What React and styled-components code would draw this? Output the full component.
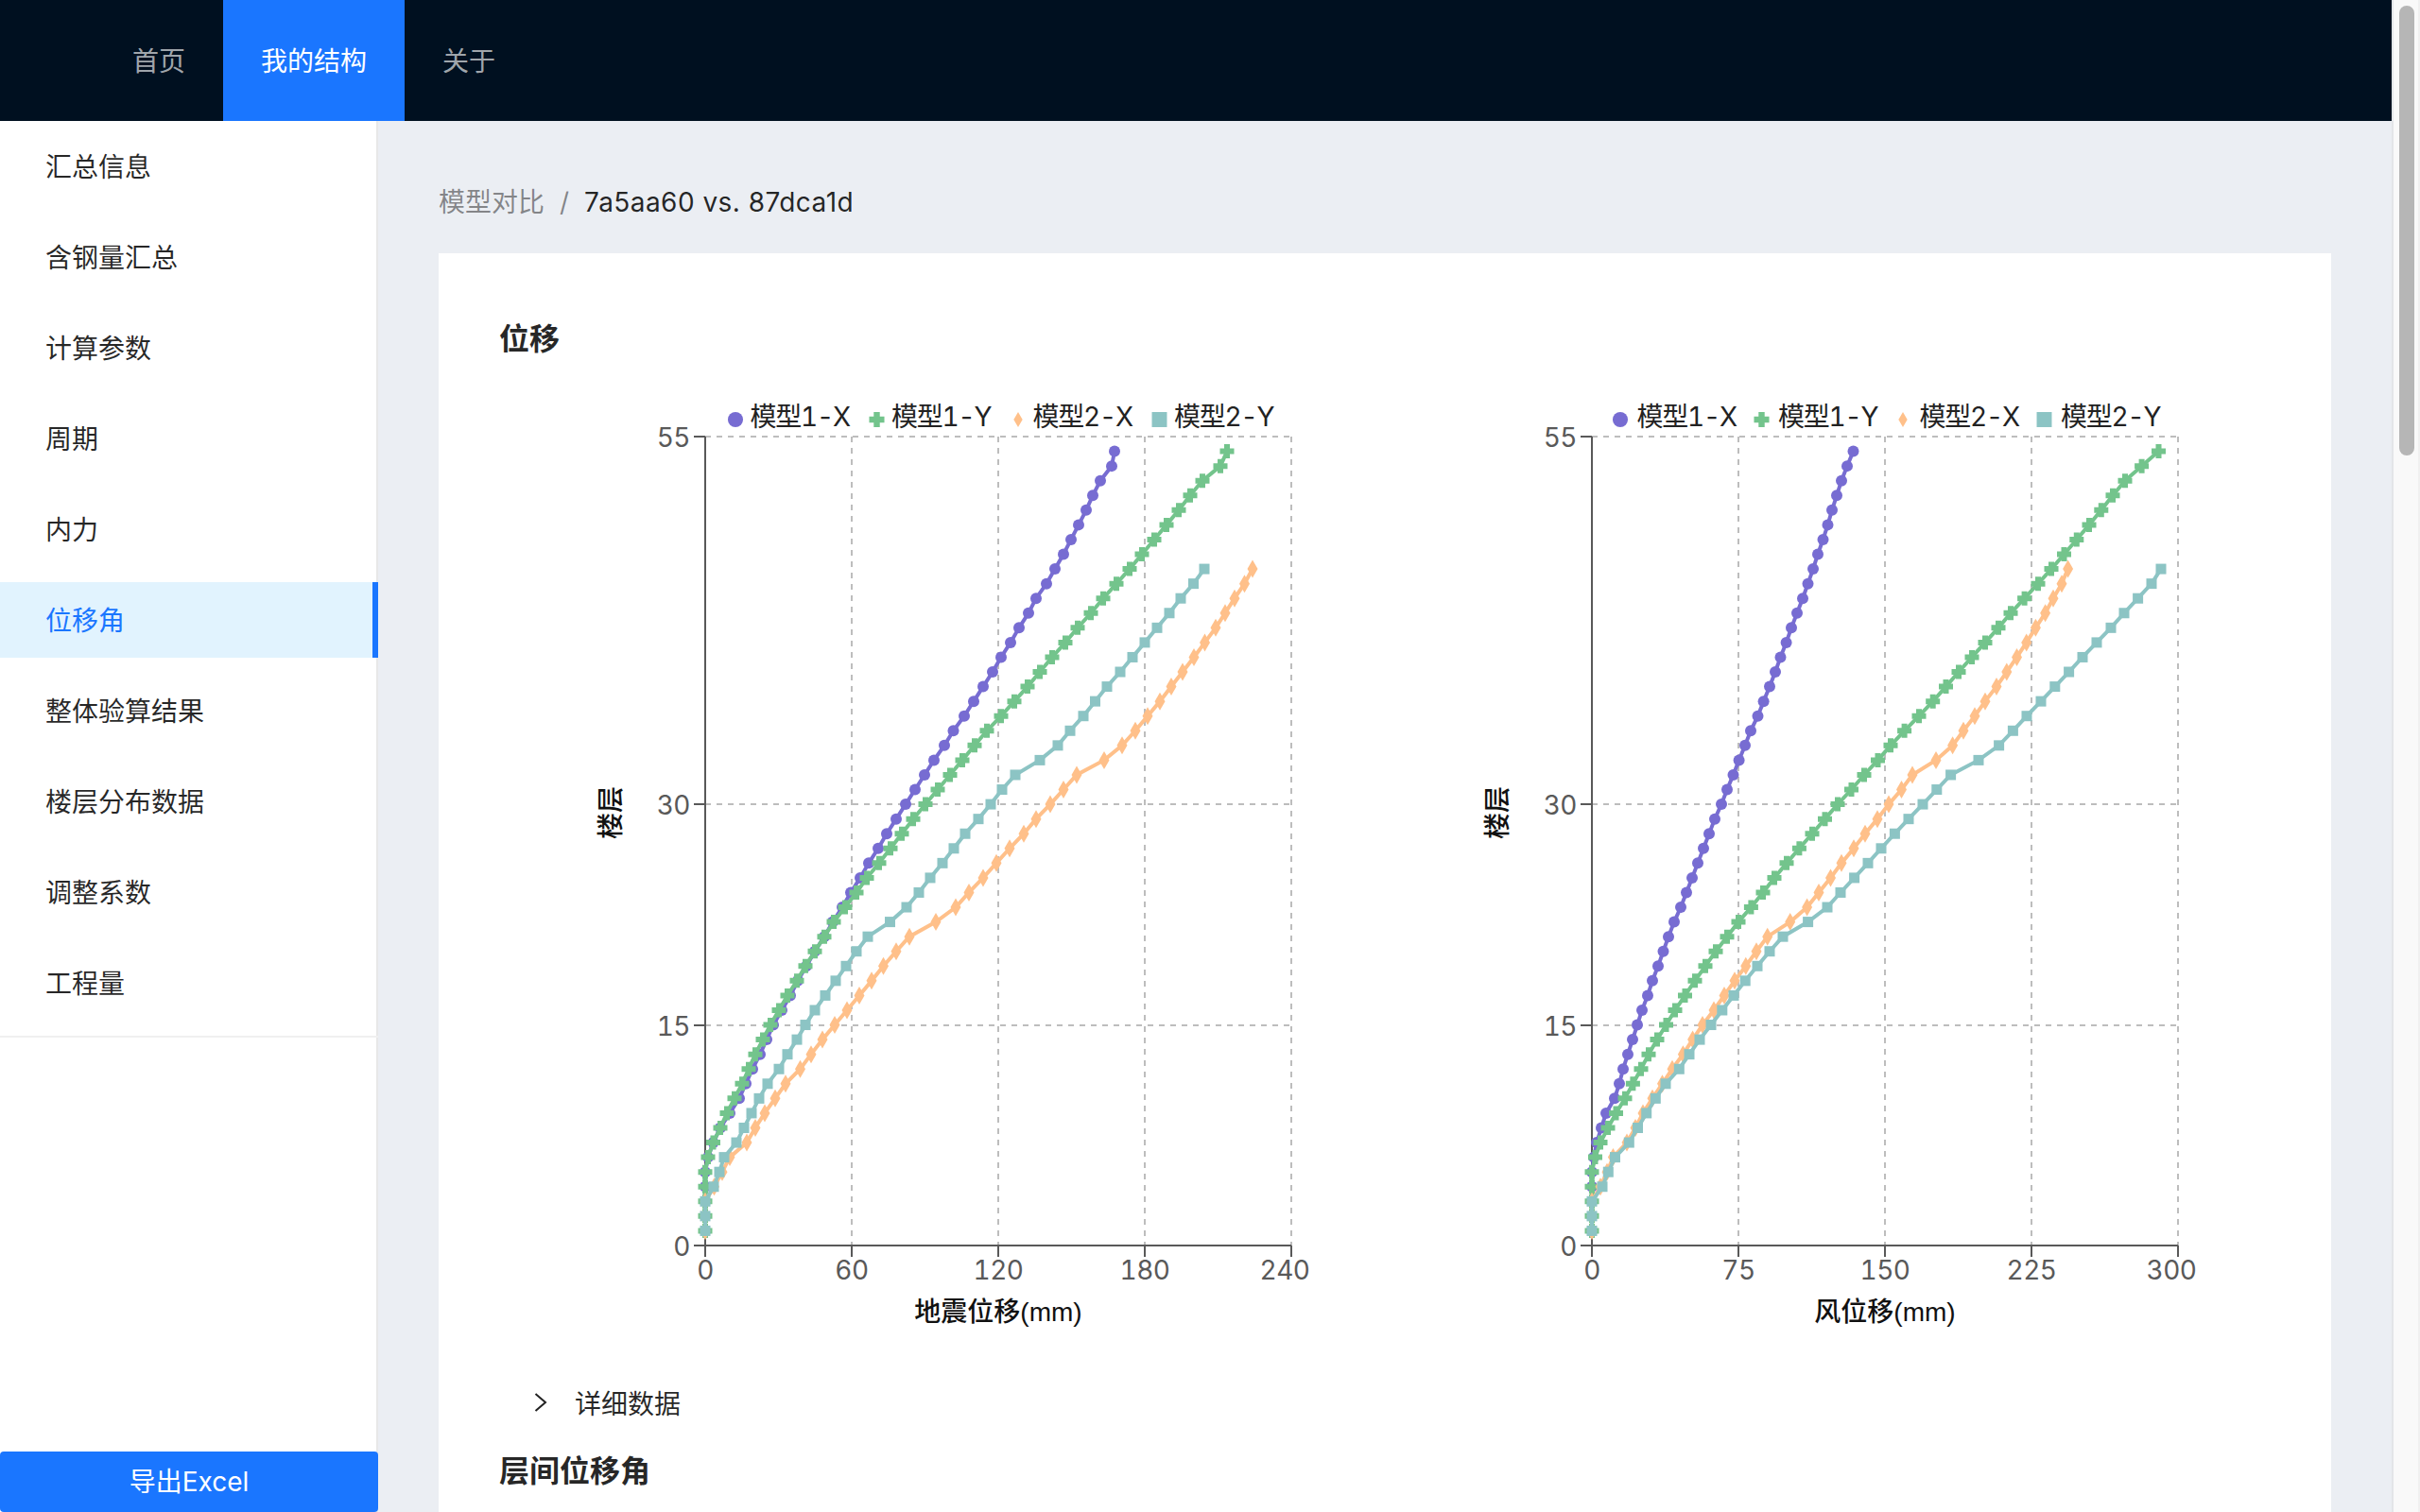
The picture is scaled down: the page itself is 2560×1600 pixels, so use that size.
import React from 'react';
import styled, { createGlobalStyle } from 'styled-components';

const FONT = `Inter, "Noto Sans CJK SC", "Liberation Sans", sans-serif`;

const GlobalStyle = createGlobalStyle`
  html, body {
    margin: 0;
    height: 100%;
    overflow: hidden;
  }
  body {
    font-family: ${FONT};
    font-size: 28px;
    color: rgba(0, 0, 0, 0.85);
  }
`;

const Shell = styled.div`
  display: flex;
  width: 100%;
  height: 100vh;
`;

const Page = styled.div`
  flex: 1;
  min-width: 0;
  display: flex;
  flex-direction: column;
`;

const ScrollTrack = styled.div`
  width: 30px;
  box-sizing: border-box;
  padding: 6px 4px 0 6px;
  background: #f9f9f9;
  border-left: 2px solid #e3e5e8;
  border-right: 2px solid #f0f0f0;
`;

const ScrollThumb = styled.div`
  width: 16px;
  height: 476px;
  border-radius: 8px;
  background: #b6b6b6;
`;

const Header = styled.header`
  height: 128px;
  flex: none;
  display: flex;
  padding-left: 100px;
  background: #001020;
`;

const NavItem = styled.div`
  padding: 0 40px;
  line-height: 130px;
  font-size: 28px;
  color: ${(p) => (p.$active ? '#fff' : 'rgba(255, 255, 255, 0.65)')};
  background: ${(p) => (p.$active ? '#1a76ff' : 'transparent')};
`;

const Body = styled.div`
  flex: 1;
  min-height: 0;
  display: flex;
`;

const Sidebar = styled.aside`
  width: 400px;
  flex: none;
  display: flex;
  flex-direction: column;
  background: #fff;
  box-shadow: inset -2px 0 0 #e8e8e8;
`;

const Menu = styled.nav`
  padding-top: 8px;
  display: flex;
  flex-direction: column;
  gap: 16px;
  padding-bottom: 16px;
  border-bottom: 2px solid #f0f0f0;
`;

const MenuItem = styled.div`
  height: 80px;
  line-height: 82px;
  padding-left: 48px;
  font-size: 28px;
  color: ${(p) => (p.$active ? '#1a76ff' : 'rgba(0, 0, 0, 0.85)')};
  background: ${(p) => (p.$active ? '#e1f3fe' : 'transparent')};
  border-right: ${(p) => (p.$active ? '6px solid #1a76ff' : 'none')};
`;

const ExportButton = styled.div`
  margin-top: auto;
  height: 64px;
  line-height: 64px;
  text-align: center;
  font-size: 28px;
  color: #fff;
  background: #1a76ff;
  border-radius: 4px;
`;

const Main = styled.main`
  flex: 1;
  min-width: 0;
  overflow: hidden;
  padding: 0 64px;
  background: #ebeef3;
`;

const Breadcrumb = styled.div`
  display: flex;
  gap: 16px;
  height: 44px;
  line-height: 44px;
  margin: 64px 0 32px;
`;

const Crumb = styled.span`
  color: ${(p) => (p.$current ? 'rgba(0, 0, 0, 0.85)' : 'rgba(0, 0, 0, 0.45)')};
  letter-spacing: ${(p) => (p.$current ? '0.45px' : '0')};
`;

const Card = styled.section`
  background: #fff;
  padding: 66px 64px 64px;
`;

const SectionTitle = styled.h2`
  margin: 0;
  height: 48px;
  line-height: 50px;
  font-size: 32px;
  font-weight: 600;
  color: rgba(0, 0, 0, 0.85);
`;

const ChartGrid = styled.div`
  display: grid;
  grid-template-columns: 1fr 1fr;
  margin-top: 18px;
`;

const ChartSvg = styled.svg`
  display: block;
  width: 937px;
  height: 1020px;
`;

const TickLabel = styled.text`
  font-size: 28px;
  font-variant-numeric: tabular-nums;
  letter-spacing: -0.5px;
  fill: #595959;
  dominant-baseline: central;
`;

const AxisTitle = styled.text`
  font-family: "Liberation Sans", "Noto Sans CJK SC", sans-serif;
  font-size: 28px;
  font-weight: 500;
  fill: #111;
  text-anchor: middle;
  dominant-baseline: central;
`;

const LegendLabel = styled.text`
  font-size: 28px;
  font-variant-numeric: tabular-nums;
  letter-spacing: -1.2px;
  fill: #222;
  dominant-baseline: central;
`;

const DetailRow = styled.div`
  display: flex;
  align-items: center;
  height: 44px;
  margin-top: 42px;
  padding-left: 37px;
  gap: 29px;
`;

const NextTitle = styled(SectionTitle)`
  margin-top: 26px;
`;

const NAV = ['首页', '我的结构', '关于'];
const MENU = ['汇总信息', '含钢量汇总', '计算参数', '周期', '内力', '位移角', '整体验算结果', '楼层分布数据', '调整系数', '工程量'];

const PLOT_W = 620;
const PLOT_TOP = 62;
const PLOT_H = 856;
const FLOOR_PX = PLOT_H / 55;
const GRID = '#bdbdbd';
const AXIS = '#595959';

// x offsets from the axis in plot px, index 0 = floor 1
const quake = {
  x1: [0, 0, 0, 0, 0, 3, 8.5, 16, 26, 36, 43, 50, 58, 65, 72, 81, 90, 98, 107, 116, 126, 135, 145, 154, 164, 173, 183, 192, 202, 212, 222, 232, 242, 253, 262.5, 274, 284, 294, 304, 313, 323, 332, 342, 350, 361, 370, 379, 387, 395, 403, 410, 418, 430, 433],
  y1: [0, 0, 0, 0, 0, 3, 8.5, 16, 23, 31, 39, 46, 53, 61, 69, 78, 87, 97, 106, 116, 126, 136, 148, 160, 171, 184, 196, 208, 220, 233, 246, 259, 272, 285, 298, 313, 327, 341, 354, 367, 381, 394, 408, 421, 435, 449, 462, 475, 488, 501, 513, 526, 545, 552],
  x2: [0, 0, 0, 9.5, 18, 26, 44, 53, 63, 74, 85, 100.5, 112, 124, 137, 150, 163, 176, 188.5, 202, 216, 244, 265, 279, 294, 308, 322, 337, 350, 365, 379, 393, 422, 441, 455, 468, 481, 493, 505, 517, 528.5, 540, 550, 560, 570.5, 579],
  y2: [0, 0, 0, 9, 15, 20, 33, 41, 49, 57, 66, 78, 87, 97, 106, 116, 127, 138, 149, 160, 172, 195.5, 213, 226, 238, 251, 263, 275, 289, 302, 314, 328, 354, 373, 386, 400, 412.5, 425, 439, 452, 465, 478, 491, 503, 516.5, 528],
};

const wind = {
  x1: [0, 0, 0, 0, 0, 2, 5, 10, 15, 24, 29, 33, 38, 43, 48, 53, 59, 64, 70, 75.5, 81, 87, 94, 100, 106, 112, 118, 124, 130, 137, 143, 149.5, 155.6, 162, 168, 175.5, 181.6, 188, 194, 199.5, 205.6, 211, 217, 223, 228.5, 234, 239, 244.5, 249.5, 254, 259, 264, 270, 276.5],
  y1: [0, 0, 0, 0, 0, 3.5, 9, 17, 25.5, 35, 43.4, 52, 60, 69, 78.5, 88, 98.5, 109, 120, 131, 143, 155, 168.4, 181, 193, 206, 219.4, 233, 246.5, 260, 274.5, 288, 302.5, 316, 330.6, 346, 360.7, 374.5, 388, 402, 416, 430, 443, 457.6, 472, 486, 499.5, 512.8, 526, 538.8, 551, 564, 581.6, 599.5],
  x2: [0, 0, 0, 9, 16, 22.4, 37, 46, 54, 64, 74.5, 85, 96.4, 106.6, 117, 129, 140, 151, 162.8, 174, 185.7, 209.7, 227.6, 240, 252.5, 264, 277, 289, 302, 314, 327.5, 339, 364, 381.6, 393, 405, 416, 428, 438.8, 449.5, 459.7, 469.4, 479.6, 488, 497, 503.6],
  y2: [0, 0, 0, 11, 17.3, 24.5, 39.3, 48.5, 57.7, 67.3, 78, 92.3, 103, 114, 126, 137.8, 150, 162.2, 175, 188, 202, 228.6, 249, 263, 277.6, 292, 306, 320.4, 335, 350, 364.8, 379.6, 409, 430.6, 445.4, 460, 475, 489.8, 504.6, 519, 534, 549, 563, 577.6, 592, 602],
};

const COLORS = { x1: '#776cd2', y1: '#73c48c', x2: '#ffc08a', y2: '#8cc4c4' };

const Marker = ({ kind, x, y, size = 1 }) => {
  const fill = COLORS[kind];
  if (kind === 'x1') return <circle cx={x} cy={y} r={6 * size} fill={fill} />;
  if (kind === 'y1') {
    const a = 7.5 * size;
    const b = 3 * size;
    return <path d={`M${x - b} ${y - a}h${2 * b}v${a - b}h${a - b}v${2 * b}h${b - a}v${a - b}h${-2 * b}v${b - a}h${b - a}v${-2 * b}h${a - b}z`} fill={fill} />;
  }
  if (kind === 'x2') {
    const w = 5.5 * size;
    const h = 9.5 * size;
    return <path d={`M${x} ${y - h}L${x + w} ${y}L${x} ${y + h}L${x - w} ${y}z`} fill={fill} />;
  }
  const s = 5.5 * size;
  return <rect x={x - s} y={y - s} width={2 * s} height={2 * s} fill={fill} />;
};

const Series = ({ kind, values, originX }) => {
  const pts = values.map((v, i) => [originX + v, PLOT_TOP + PLOT_H - (i + 1) * FLOOR_PX]);
  return (
    <g>
      <polyline points={pts.map((p) => p.join(',')).join(' ')} fill="none" stroke={COLORS[kind]} strokeWidth="4" />
      {pts.map((p, i) => <Marker key={i} kind={kind} x={p[0]} y={p[1]} />)}
    </g>
  );
};

const LEGEND = [['x1', '模型1-X', 1.34], ['y1', '模型1-Y', 1.07], ['x2', '模型2-X', 0.85], ['y2', '模型2-Y', 1.45]];

const Chart = ({ data, ticks, label, originX, legendIconX }) => {
  const bottom = PLOT_TOP + PLOT_H;
  const right = originX + PLOT_W;
  return (
    <ChartSvg viewBox="0 0 937 1020">
      {[0, 389, 623].map((off) => (
        <line key={off} x1={originX} x2={right} y1={PLOT_TOP + off} y2={PLOT_TOP + off} stroke={GRID} strokeWidth="2" strokeDasharray="6 6" />
      ))}
      {[1, 2, 3, 4].map((n) => (
        <line key={n} x1={originX + n * 155} x2={originX + n * 155} y1={PLOT_TOP} y2={bottom} stroke={GRID} strokeWidth="2" strokeDasharray="6 6" />
      ))}

      <path d={`M${originX} ${PLOT_TOP}V${bottom}H${right}`} fill="none" stroke={AXIS} strokeWidth="2" />
      {[['55', 0], ['30', 389], ['15', 623], ['0', 856]].map(([t, off]) => (
        <g key={t}>
          <line x1={originX - 12} x2={originX} y1={PLOT_TOP + off} y2={PLOT_TOP + off} stroke={AXIS} strokeWidth="2" />
          <TickLabel x={originX - 16} y={PLOT_TOP + off + 1} textAnchor="end">{t}</TickLabel>
        </g>
      ))}
      {ticks.map((t, i) => (
        <g key={t}>
          <line x1={originX + i * 155} x2={originX + i * 155} y1={bottom} y2={bottom + 12} stroke={AXIS} strokeWidth="2" />
          {/* the last label is pulled in from the plot edge */}
          <TickLabel x={originX + i * 155 - (i === 4 ? 7 : 0)} y={bottom + 26} textAnchor="middle">{t}</TickLabel>
        </g>
      ))}

      <AxisTitle x={originX + PLOT_W / 2} y={988}>{label}</AxisTitle>
      <AxisTitle transform={`translate(${originX - 100} 460) rotate(-90)`}>楼层</AxisTitle>

      {LEGEND.map(([kind, name, size], i) => (
        <g key={kind}>
          <Marker kind={kind} x={originX + legendIconX + i * 149.5} y={44} size={size} />
          <LegendLabel x={originX + 47.5 + i * 149.5} y={41}>{name}</LegendLabel>
        </g>
      ))}

      <Series kind="x1" values={data.x1} originX={originX} />
      <Series kind="y1" values={data.y1} originX={originX} />
      <Series kind="x2" values={data.x2} originX={originX} />
      <Series kind="y2" values={data.y2} originX={originX} />
    </ChartSvg>
  );
};

const App = () => (
  <>
    <GlobalStyle />
    <Shell>
      <Page>
        <Header>
          {NAV.map((n) => <NavItem key={n} $active={n === '我的结构'}>{n}</NavItem>)}
        </Header>
        <Body>
          <Sidebar>
            <Menu>
              {MENU.map((m) => <MenuItem key={m} $active={m === '位移角'}>{m}</MenuItem>)}
            </Menu>
            <ExportButton>导出Excel</ExportButton>
          </Sidebar>
          <Main>
            <Breadcrumb>
              <Crumb>模型对比</Crumb>
              <Crumb>/</Crumb>
              <Crumb $current>7a5aa60 vs. 87dca1d</Crumb>
            </Breadcrumb>
            <Card>
              <SectionTitle>位移</SectionTitle>
              <ChartGrid>
                <Chart data={quake} ticks={['0', '60', '120', '180', '240']} label="地震位移(mm)" originX={218} legendIconX={32} />
                <Chart data={wind} ticks={['0', '75', '150', '225', '300']} label="风位移(mm)" originX={219} legendIconX={30} />
              </ChartGrid>
              <DetailRow>
                <svg width="14" height="20" viewBox="0 0 14 20">
                  <path d="M1.5 1L12 10L1.5 19" fill="none" stroke="#222" strokeWidth="2" />
                </svg>
                <span>详细数据</span>
              </DetailRow>
              <NextTitle>层间位移角</NextTitle>
            </Card>
          </Main>
        </Body>
      </Page>
      <ScrollTrack>
        <ScrollThumb />
      </ScrollTrack>
    </Shell>
  </>
);

export default App;
